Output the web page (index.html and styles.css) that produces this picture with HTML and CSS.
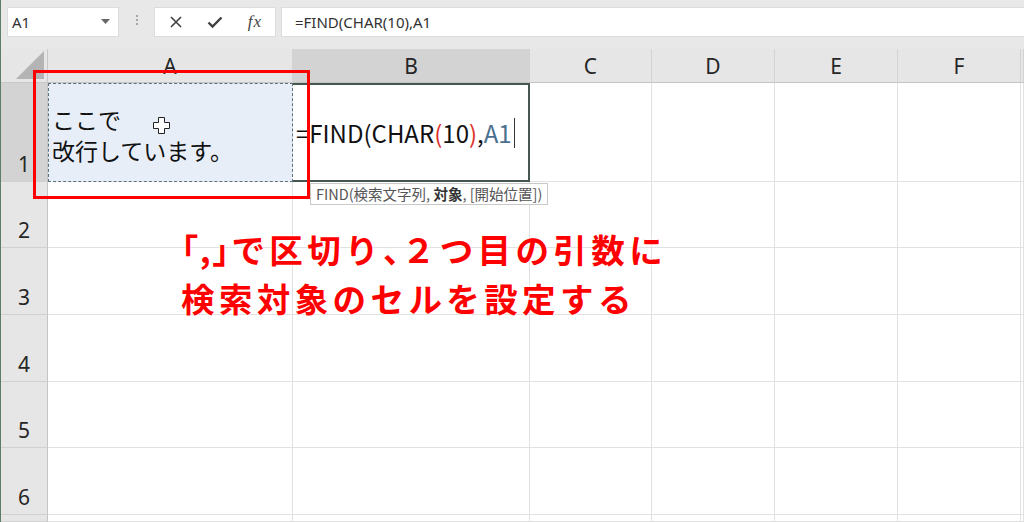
FILE: index.html
```html
<!DOCTYPE html>
<html lang="ja">
<head>
  <meta charset="UTF-8">
  <title>FIND CHAR(10)</title>
  <link rel="stylesheet" href="styles.css">
</head>
<body>

  <div class="app">
    <div class="toolbar">
      <div class="namebox">
        <span>A1</span>
        <svg class="drop" width="9" height="5" viewBox="0 0 9 5"><path d="M0 0h9L4.5 5z" fill="#666"/></svg>
      </div>
      <div class="grip"><i></i><i></i><i></i></div>
      <div class="fbuttons">
        <svg width="14" height="14" viewBox="0 0 14 14"><path d="M2 2l10 10M12 2L2 12" stroke="#3f3f3f" stroke-width="1.6"/></svg>
        <svg width="16" height="14" viewBox="0 0 16 14"><path d="M1.5 7.5l4 4L14.5 2.5" stroke="#3f3f3f" stroke-width="2.4" fill="none"/></svg>
        <span class="fx">fx</span>
      </div>
      <div class="formula">=FIND(CHAR(10),A1</div>
    </div>

    <div class="sheet">
      <div class="corner"><svg width="30" height="30" viewBox="0 0 30 30"><path d="M29 1V29H1z" fill="#b4b4b4"/></svg></div>
      <div class="colhead">A</div>
      <div class="colhead sel">B</div>
      <div class="colhead">C</div>
      <div class="colhead">D</div>
      <div class="colhead">E</div>
      <div class="colhead">F</div>
      <div class="colhead"></div>

      <div class="rowhead sel">1</div>
      <div class="cell ref">
        <div class="celltext">ここで<br>改行しています。</div>
        <svg class="pointer" width="17" height="17" viewBox="0 0 17 17"><path d="M5.5 0.5h6v5h5v6h-5v5h-6v-5h-5v-6h5z" fill="#fff" stroke="#222"/></svg>
      </div>
      <div class="cell active">=FIND(CHAR<span class="paren">(</span>10<span class="paren">)</span>,<span class="arg">A1</span><span class="caret"></span></div>
      <div class="cell"></div><div class="cell"></div><div class="cell"></div><div class="cell"></div><div class="cell"></div>

      <div class="rowhead">2</div>
      <div class="cell"></div><div class="cell"></div><div class="cell"></div><div class="cell"></div><div class="cell"></div><div class="cell"></div><div class="cell"></div>
      <div class="rowhead">3</div>
      <div class="cell"></div><div class="cell"></div><div class="cell"></div><div class="cell"></div><div class="cell"></div><div class="cell"></div><div class="cell"></div>
      <div class="rowhead">4</div>
      <div class="cell"></div><div class="cell"></div><div class="cell"></div><div class="cell"></div><div class="cell"></div><div class="cell"></div><div class="cell"></div>
      <div class="rowhead">5</div>
      <div class="cell"></div><div class="cell"></div><div class="cell"></div><div class="cell"></div><div class="cell"></div><div class="cell"></div><div class="cell"></div>
      <div class="rowhead">6</div>
      <div class="cell"></div><div class="cell"></div><div class="cell"></div><div class="cell"></div><div class="cell"></div><div class="cell"></div><div class="cell"></div>
      <div class="rowhead"></div>
      <div class="cell"></div><div class="cell"></div><div class="cell"></div><div class="cell"></div><div class="cell"></div><div class="cell"></div><div class="cell"></div>

      <!-- overlays -->
      <div class="tooltip">FIND(検索文字列, <b>対象</b>, [開始位置])</div>
      <div class="mark"></div>
      <div class="note">
        <span class="palt">「,」</span>で区切り<span class="palt">、</span>２つ目の引数に<br>
        検索対象のセルを設定する
      </div>
    </div>
  </div>

</body>
</html>
```

FILE: styles.css
```css
html, body {
  margin: 0;
  height: 100%;
  overflow: hidden;
  background: #fff;
}
.app {
  height: 100%;
  border-left: 1px solid #5d7d6b;
  font-family: "Noto Sans", "Noto Sans CJK JP", sans-serif;
  color: #222;
}

/* formula bar */
.toolbar {
  height: 49px;
  background: #e8e8e8;
  display: flex;
  align-items: flex-start;
  padding-top: 7px;
  padding-left: 6px;
  box-sizing: border-box;
}
.namebox {
  width: 112px;
  height: 30px;
  background: #fff;
  border: 1px solid #dcdcdc;
  box-sizing: border-box;
  display: flex;
  align-items: center;
  justify-content: space-between;
  padding: 0 8px 0 4px;
  font-size: 15px;
  color: #333;
}
.namebox .drop { margin-top: -2px; }
.grip {
  width: 35px;
  display: flex;
  flex-direction: column;
  align-items: center;
  gap: 2px;
  padding-top: 8px;
}
.grip i {
  width: 2px;
  height: 2px;
  background: #a6a6a6;
}
.fbuttons {
  width: 122px;
  height: 30px;
  background: #fff;
  border: 1px solid #dcdcdc;
  box-sizing: border-box;
  display: flex;
  align-items: center;
  justify-content: space-between;
  padding: 0 13px 0 14px;
}
.fx {
  font-family: "Liberation Serif", serif;
  font-style: italic;
  font-size: 17px;
  color: #444;
  letter-spacing: 1px;
}
.formula {
  flex: 1;
  height: 30px;
  margin-left: 5px;
  background: #fff;
  border: 1px solid #dcdcdc;
  border-right: 0;
  box-sizing: border-box;
  padding-left: 13px;
  font-size: 15px;
  line-height: 28px;
  color: #333;
}

/* grid */
.sheet {
  position: relative;
  display: grid;
  grid-template-columns: 47px 245px 237px 122px 123px 123px 123px 1fr;
  grid-template-rows: 34px 99px 66px 67px 67px 66px 67px 1fr;
  height: calc(100% - 49px);
}
.corner {
  background: #e6e6e6;
  border-right: 1px solid #c8c8c8;
  border-bottom: 1px solid #c8c8c8;
  box-sizing: border-box;
  display: flex;
  align-items: flex-end;
  justify-content: flex-end;
  padding: 0 2px 2px 0;
}
.colhead {
  background: #e6e6e6;
  border-right: 1px solid #d3d3d3;
  border-bottom: 1px solid #c4c4c4;
  box-sizing: border-box;
  display: flex;
  align-items: center;
  justify-content: center;
  font-size: 21px;
  color: #262626;
}
.rowhead {
  background: #e6e6e6;
  border-right: 1px solid #c4c4c4;
  border-bottom: 1px solid #d0d0d0;
  box-sizing: border-box;
  display: flex;
  align-items: flex-end;
  justify-content: center;
  padding-bottom: 3px;
  font-size: 21px;
  color: #262626;
}
.sel { background: #d3d3d3; }
.cell {
  border-right: 1px solid #e1e1e1;
  border-bottom: 1px solid #e1e1e1;
  box-sizing: border-box;
}

.ref {
  position: relative;
  background: #e8eef8;
  border: 1px dashed #5c7079;
  display: flex;
  align-items: center;
  padding-left: 3px;
}
.celltext {
  font-family: "Noto Sans CJK JP", sans-serif;
  font-size: 23px;
  line-height: 31px;
  color: #111;
  margin-top: 4px;
}
.pointer {
  position: absolute;
  left: 104px;
  top: 33px;
}
.active {
  border: 2px solid #46574f;
  border-left: 0;
  display: flex;
  align-items: center;
  padding-left: 3px;
  font-family: "Noto Sans CJK JP", sans-serif;
  font-size: 24px;
  color: #111;
}
.paren { color: #e0302a; }
.arg { color: #4a6f8f; }
.caret {
  width: 1px;
  height: 30px;
  background: #333;
  margin-left: 2px;
}

/* overlays */
.tooltip {
  position: absolute;
  left: 309px;
  top: 134px;
  height: 22px;
  padding: 0 5px;
  background: #fff;
  border: 1px solid #c8c8c8;
  box-sizing: border-box;
  font-family: "Noto Sans CJK JP", sans-serif;
  font-size: 14.5px;
  line-height: 20px;
  color: #555;
}
.tooltip b { color: #333; }
.mark {
  position: absolute;
  left: 32px;
  top: 21px;
  width: 277px;
  height: 129px;
  border: 3px solid #ff0000;
  box-sizing: border-box;
}
.note {
  position: absolute;
  left: 180px;
  top: 175px;
  font-family: "Noto Sans CJK JP", sans-serif;
  font-weight: 700;
  font-size: 33.5px;
  line-height: 49px;
  letter-spacing: 4.4px;
  color: #ff0000;
  text-shadow: 0 0 2px #fff, 0 0 2px #fff;
}
.palt {
  font-feature-settings: "palt";
  letter-spacing: 2px;
}
```
